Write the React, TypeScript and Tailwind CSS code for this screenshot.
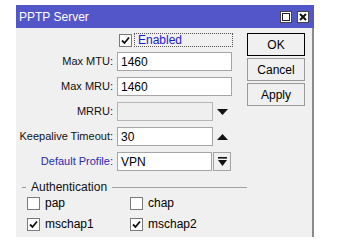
import React from "react"

const font = { fontFamily: '"Liberation Sans", Arial, sans-serif' }

function Check({ checked }: { checked?: boolean }) {
  return (
    <span className="flex h-[13px] w-[13px] items-center justify-center border border-[#7a7a7a] bg-white">
      {checked && (
        <svg width="9" height="9" viewBox="0 0 9 9">
          <path d="M1 4.5 L3.5 7 L8 1.5" fill="none" stroke="#111" strokeWidth="1.8" />
        </svg>
      )}
    </span>
  )
}

function Field({ label, value, blue }: { label: string; value?: string; blue?: boolean }) {
  return (
    <>
      <span className={`text-right ${blue ? "text-[#2a2ab4]" : "text-[#111]"}`}>{label}</span>
      <span className="flex h-[19px] w-[115px] items-center border border-[#a5a5a5] bg-white px-[3px] text-[12px] text-black">
        {value}
      </span>
    </>
  )
}

function Triangle({ up }: { up?: boolean }) {
  return (
    <svg width="11" height="6" viewBox="0 0 11 6" className="mx-auto">
      <path d={up ? "M0 6 L5.5 0 L11 6 Z" : "M0 0 L11 0 L5.5 6 Z"} fill="#111" />
    </svg>
  )
}

function Button({ children, primary }: { children: React.ReactNode; primary?: boolean }) {
  return (
    <div
      className={`flex h-[23px] w-[58px] items-center justify-center bg-[#f0f0f0] text-[12px] text-black ${
        primary ? "border border-black" : "border border-[#9a9a9a]"
      }`}
    >
      {children}
    </div>
  )
}

export default function App() {
  return (
    <div className="h-[246px] w-[341px] overflow-hidden bg-white text-[11px]" style={font}>
      <div className="ml-[16px] mt-[5px] w-[298px]">
        {/* title bar */}
        <div className="flex h-[23px] items-center justify-between bg-[#5356c8] pl-[3px] pr-[5px]">
          <span className="text-[12px] text-white">PPTP Server</span>
          <div className="flex gap-[5px]">
            <svg width="12" height="12" viewBox="0 0 12 12">
              <rect x="0.5" y="0.5" width="11" height="11" fill="#fff" stroke="#444" />
              <rect x="2.5" y="2.5" width="7" height="7" fill="#fff" stroke="#222" />
            </svg>
            <svg width="12" height="12" viewBox="0 0 12 12">
              <rect x="0.5" y="0.5" width="11" height="11" fill="#fff" stroke="#444" />
              <path d="M3 3 L9 9 M9 3 L3 9" stroke="#111" strokeWidth="2" />
            </svg>
          </div>
        </div>

        {/* body */}
        <div className="flex h-[209px] border-r-2 border-[#8a8a8a] bg-[#f0f0f0]">
          <div className="w-[231px]">
            <div className="mt-[5px] flex h-[14px] items-center">
              <span className="ml-[103px]">
                <Check checked />
              </span>
              <span className="ml-[2px] flex h-[14px] w-[99px] items-center border border-dotted border-[#555] pl-[3px] text-[12px] text-[#1a1ac8]">
                Enabled
              </span>
            </div>

            <div className="mt-[5px] grid grid-cols-[97px_auto] items-center gap-x-[4px] gap-y-[6px]">
              <Field label="Max MTU:" value="1460" />
              <Field label="Max MRU:" value="1460" />

              <span className="text-right text-[#111]">MRRU:</span>
              <div className="flex items-center">
                <span className="h-[19px] w-[96px] border border-[#b5b5b5] bg-[#efefef]" />
                <span className="w-[19px]">
                  <Triangle />
                </span>
              </div>

              <span className="text-right text-[#111]">Keepalive Timeout:</span>
              <div className="flex items-center">
                <span className="flex h-[19px] w-[96px] items-center border border-[#a5a5a5] bg-white px-[3px] text-[12px] text-black">
                  30
                </span>
                <span className="w-[19px]">
                  <Triangle up />
                </span>
              </div>

              <span className="text-right text-[#2a2ab4]">Default Profile:</span>
              <div className="flex items-center">
                <span className="flex h-[19px] w-[95px] items-center border border-[#a5a5a5] bg-white px-[3px] text-[12px] text-black">
                  VPN
                </span>
                <span className="ml-[1px] flex h-[19px] w-[18px] items-center justify-center border border-[#a5a5a5] bg-[#f0f0f0]">
                  <svg width="9" height="9" viewBox="0 0 9 9">
                    <rect x="0" y="0" width="9" height="1.6" fill="#111" />
                    <path d="M0 3 L9 3 L4.5 9 Z" fill="#111" />
                  </svg>
                </span>
              </div>
            </div>

            {/* authentication group */}
            <div className="mt-[9px] flex h-[14px] items-center">
              <span className="ml-[6px] h-px w-[4px] bg-[#9a9a9a]" />
              <span className="ml-[5px] text-[12px] text-[#111]">Authentication</span>
              <span className="ml-[5px] h-px flex-1 bg-[#a0a0a0]" />
            </div>

            <div className="mt-[3px] grid grid-cols-[103px_auto] gap-y-[8px] pl-[11px] text-[12px] leading-[13px] text-black">
              <label className="flex h-[13px] items-center gap-[5px]">
                <Check />
                pap
              </label>
              <label className="flex h-[13px] items-center gap-[5px]">
                <Check />
                chap
              </label>
              <label className="flex h-[13px] items-center gap-[5px]">
                <Check checked />
                mschap1
              </label>
              <label className="flex h-[13px] items-center gap-[5px]">
                <Check checked />
                mschap2
              </label>
            </div>
          </div>

          {/* buttons */}
          <div className="mt-[5px] flex flex-col gap-[2px]">
            <Button primary>OK</Button>
            <Button>Cancel</Button>
            <Button>Apply</Button>
          </div>
        </div>
      </div>
    </div>
  )
}
